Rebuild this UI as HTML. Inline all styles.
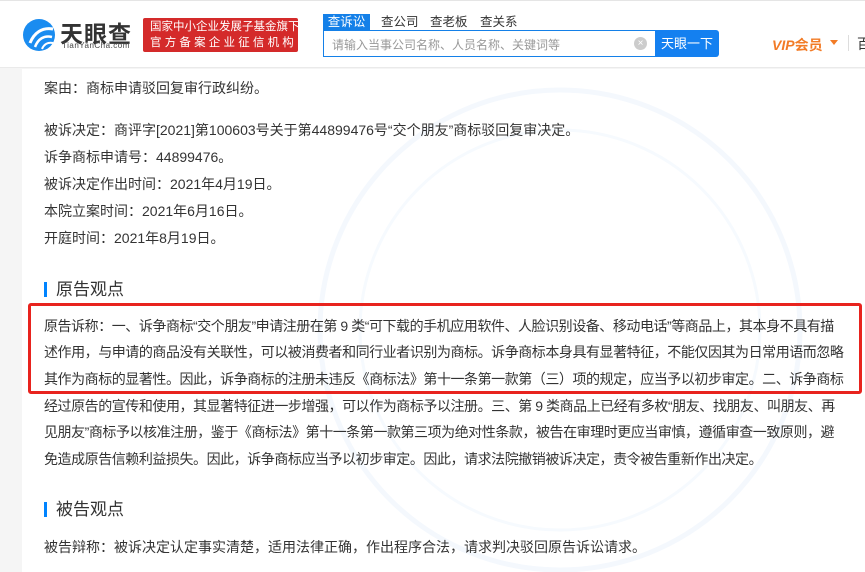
<!DOCTYPE html>
<html><head><meta charset="utf-8"><style>
*{margin:0;padding:0;box-sizing:border-box}
body{width:865px;height:572px;overflow:hidden;background:#f5f5f5;font-family:"Liberation Sans","Noto Sans CJK SC",sans-serif;position:relative;color:#333}
.hdr{position:absolute;left:0;top:0;width:865px;height:68px;background:#fff;border-top:1px solid #e5e5e5;border-bottom:1px solid #eaeaea}
.main{position:absolute;left:22px;top:69px;width:843px;height:503px;background:#fff}
.t{position:absolute;left:44px;font-size:14px;white-space:nowrap;line-height:20px;color:#333}
.w{letter-spacing:-0.45px}
.h{position:absolute;left:44px;font-size:17px;color:#333;line-height:20px}
.h:before{content:"";position:absolute;left:0;top:2px;width:3px;height:15px;background:#0084ff}
.h span{margin-left:12px}
</style></head><body>
<div class="hdr">
 <svg style="position:absolute;left:22px;top:16px" width="34" height="36" viewBox="0 0 34 36">
  <circle cx="17" cy="18" r="16" fill="#1a8cf0"/>
  <path d="M8 26 C12 16 20 10 31 12" stroke="#fff" stroke-width="3" fill="none"/>
  <path d="M13 30 C16 22 22 18 30 20" stroke="#fff" stroke-width="2.5" fill="none"/>
  <path d="M20 32 C22 27 26 25 31 26" stroke="#fff" stroke-width="2" fill="none"/>
 </svg>
 <div style="position:absolute;left:60px;top:14px;font-size:23px;font-weight:bold;color:#333;letter-spacing:1px">天眼查</div>
 <div style="position:absolute;left:62px;top:40px;font-size:8px;color:#444;letter-spacing:0.5px">TianYanCha.com</div>
 <div style="position:absolute;left:143px;top:17px;width:155px;height:34px;background:#d42a2a;border-radius:2px;color:#fff;font-size:11.5px;line-height:16px;padding:1px 0 0 7px;white-space:nowrap">国家中小企业发展子基金旗下<br><span style="letter-spacing:3.2px">官方备案企业征信机构</span></div>
 <div style="position:absolute;left:323px;top:13px;width:47px;height:17px;background:#1480e8;color:#fff;font-size:12.5px;text-align:center;line-height:17px">查诉讼</div>
 <div style="position:absolute;left:381px;top:13px;font-size:12.5px;color:#333;line-height:17px">查公司</div>
 <div style="position:absolute;left:430px;top:13px;font-size:12.5px;color:#333;line-height:17px">查老板</div>
 <div style="position:absolute;left:480px;top:13px;font-size:12.5px;color:#333;line-height:17px">查关系</div>
 <div style="position:absolute;left:323px;top:29px;width:333px;height:27px;border:1px solid #1480e8;background:#fff">
  <span style="position:absolute;left:8px;top:5px;font-size:12px;color:#999">请输入当事公司名称、人员名称、关键词等</span>
  <span style="position:absolute;left:310px;top:6px;width:13px;height:13px;border-radius:50%;background:#ccc;color:#fff;font-size:10px;line-height:13px;text-align:center">×</span>
 </div>
 <div style="position:absolute;left:655px;top:29px;width:64px;height:27px;background:#1480f0;border-radius:0 3px 3px 0;color:#fff;font-size:13px;line-height:27px;text-align:center">天眼一下</div>
 <div style="position:absolute;left:772px;top:34px;font-size:14px;font-weight:bold;color:#f27b26;font-style:italic">VIP<span style="font-style:normal">会员</span></div>
 <div style="position:absolute;left:830px;top:39px;width:0;height:0;border-left:4px solid transparent;border-right:4px solid transparent;border-top:5px solid #f27b26"></div>
 <div style="position:absolute;left:848px;top:34px;width:1px;height:16px;background:#ddd"></div>
 <div style="position:absolute;left:857px;top:33px;font-size:14px;color:#333">百</div>
</div>
<div class="main"></div>
<svg style="position:absolute;left:280px;top:80px" width="560" height="492"><circle cx="280" cy="250" r="240" fill="none" stroke="#f4f8fd" stroke-width="5"/><circle cx="280" cy="250" r="200" fill="none" stroke="#f6fafe" stroke-width="3"/></svg>
<div class="t" style="top:78px">案由：商标申请驳回复审行政纠纷。</div>
<div class="t" style="top:120px">被诉决定：商评字[2021]第100603号关于第44899476号“交个朋友”商标驳回复审决定。</div>
<div class="t" style="top:147px">诉争商标申请号：44899476。</div>
<div class="t" style="top:174px">被诉决定作出时间：2021年4月19日。</div>
<div class="t" style="top:201px">本院立案时间：2021年6月16日。</div>
<div class="t" style="top:228px">开庭时间：2021年8月19日。</div>
<div class="h" style="top:280px"><span>原告观点</span></div>
<div style="position:absolute;left:28px;top:303px;width:834px;height:91px;border:3px solid #e8231e;border-radius:3px"></div>
<div class="t w" style="top:316px">原告诉称：一、诉争商标“交个朋友”申请注册在第 9 类“可下载的手机应用软件、人脸识别设备、移动电话”等商品上，其本身不具有描</div>
<div class="t w" style="top:342px">述作用，与申请的商品没有关联性，可以被消费者和同行业者识别为商标。诉争商标本身具有显著特征，不能仅因其为日常用语而忽略</div>
<div class="t w" style="top:369px">其作为商标的显著性。因此，诉争商标的注册未违反《商标法》第十一条第一款第（三）项的规定，应当予以初步审定。二、诉争商标</div>
<div class="t w" style="top:396px">经过原告的宣传和使用，其显著特征进一步增强，可以作为商标予以注册。三、第 9 类商品上已经有多枚“朋友、找朋友、叫朋友、再</div>
<div class="t w" style="top:422px">见朋友”商标予以核准注册，鉴于《商标法》第十一条第一款第三项为绝对性条款，被告在审理时更应当审慎，遵循审查一致原则，避</div>
<div class="t w" style="top:449px">免造成原告信赖利益损失。因此，诉争商标应当予以初步审定。因此，请求法院撤销被诉决定，责令被告重新作出决定。</div>
<div class="h" style="top:500px"><span>被告观点</span></div>
<div class="t" style="top:537px">被告辩称：被诉决定认定事实清楚，适用法律正确，作出程序合法，请求判决驳回原告诉讼请求。</div>
</body></html>
